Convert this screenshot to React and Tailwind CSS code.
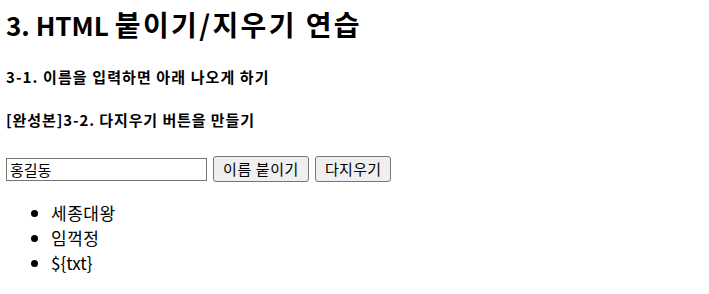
export default function App() {
  const font = { fontFamily: '"Noto Sans CJK KR", "Noto Sans", sans-serif' };
  return (
    <div className="bg-white w-[709px] h-[294px] overflow-hidden px-[6px] text-black" style={font}>
      <h2 className="text-[26px] font-bold leading-[30px] pt-[9px] m-0">
        <span>3. HTML </span>
        <span className="text-[28px] tracking-[2.4px]">붙이기/지우기 연습</span>
      </h2>
      <p className="text-[15px] font-bold leading-[20px] mt-[27px] tracking-[1.1px]">3-1. 이름을 입력하면 아래 나오게 하기</p>
      <p className="text-[15px] font-bold leading-[20px] mt-[23px] tracking-[0.9px]">[완성본]3-2. 다지우기 버튼을 만들기</p>
      <div className="flex items-center gap-[6px] mt-[26px]">
        <input
          defaultValue="홍길동"
          className="w-[201px] h-[23px] border border-[#767676] px-[3px] text-[15px] leading-[20px] outline-none"
          style={font}
        />
        <button className="h-[26px] px-[9px] bg-[#efefef] border border-[#767676] rounded-[3px] text-[15px] leading-[20px] tracking-[0.6px]" style={font}>이름 붙이기</button>
        <button className="h-[26px] px-[9px] bg-[#efefef] border border-[#767676] rounded-[3px] text-[15px] leading-[20px] tracking-[0.3px]" style={font}>다지우기</button>
      </div>
      <ul className="list-disc pl-[45px] mt-[18px] text-[17px] leading-[25px]">
        <li className="tracking-[0.5px]">세종대왕</li>
        <li className="tracking-[0.5px]">임꺽정</li>
        <li>{'${txt}'}</li>
      </ul>
    </div>
  );
}
